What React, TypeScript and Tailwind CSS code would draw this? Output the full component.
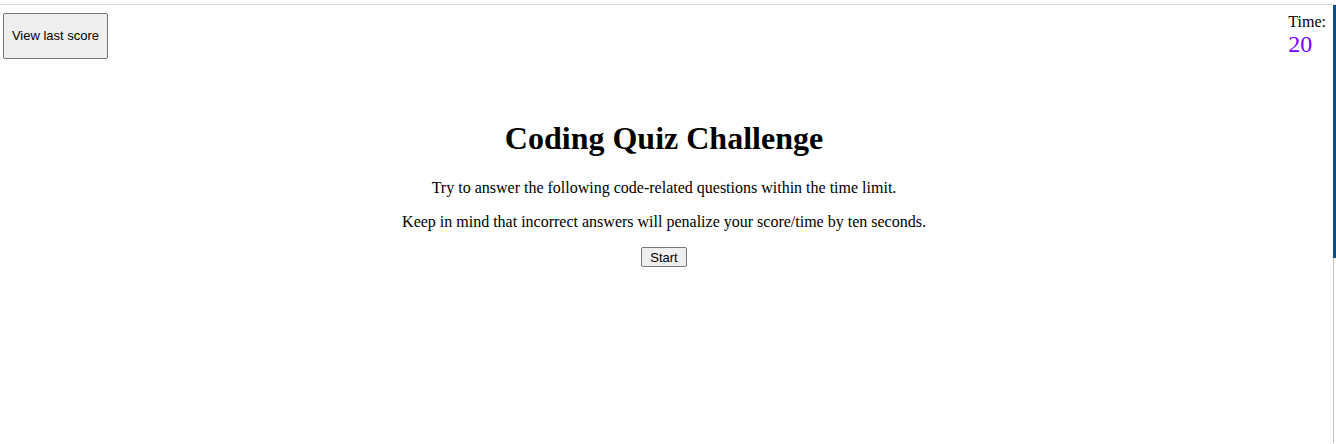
import React, { useState } from 'react';

export default function App() {
    const [time] = useState(20);

    return (
        <div className="pt-1 bg-white min-h-[444px]">
            <div className="flex border-t border-[#d9d9d9] min-h-[439px]">
                <div className="flex-1 min-w-0">
                    <header className="flex justify-between items-start pt-2 pl-[3px] pr-[7px]">
                        <button className="w-[105px] h-[46px] bg-[#efefef] border border-[#767676] rounded-[2px] text-[13px] text-black font-['Liberation_Sans',Arial,sans-serif]">
                            View last score
                        </button>
                        <div className="font-['Liberation_Serif','Times_New_Roman',serif] text-black">
                            <div className="text-[16px] leading-[18px]">Time:</div>
                            <div className="text-[24px] leading-[27px] text-[#7a00ff]">{time}</div>
                        </div>
                    </header>

                    <main className="flex flex-col items-center mt-[61px] mr-[5px] font-['Liberation_Serif','Times_New_Roman',serif] text-black">
                        <h1 className="text-[32px] font-bold leading-[37px]">Coding Quiz Challenge</h1>
                        <p className="text-[16px] leading-[18px] mt-[22px]">
                            Try to answer the following code-related questions within the time limit.
                        </p>
                        <p className="text-[16px] leading-[18px] mt-[16px]">
                            Keep in mind that incorrect answers will penalize your score/time by ten seconds.
                        </p>
                        <button className="mt-[16px] h-[20px] px-[8px] bg-[#efefef] border border-[#767676] rounded-[2px] text-[13px] leading-none font-['Liberation_Sans',Arial,sans-serif]">
                            Start
                        </button>
                    </main>
                </div>
                <aside className="w-[3px] flex flex-col">
                    <div className="h-[253px] bg-[#0a4d8c]" />
                    <div className="flex-1 w-px bg-[#c4c4c4]" />
                </aside>
            </div>
        </div>
    );
}
